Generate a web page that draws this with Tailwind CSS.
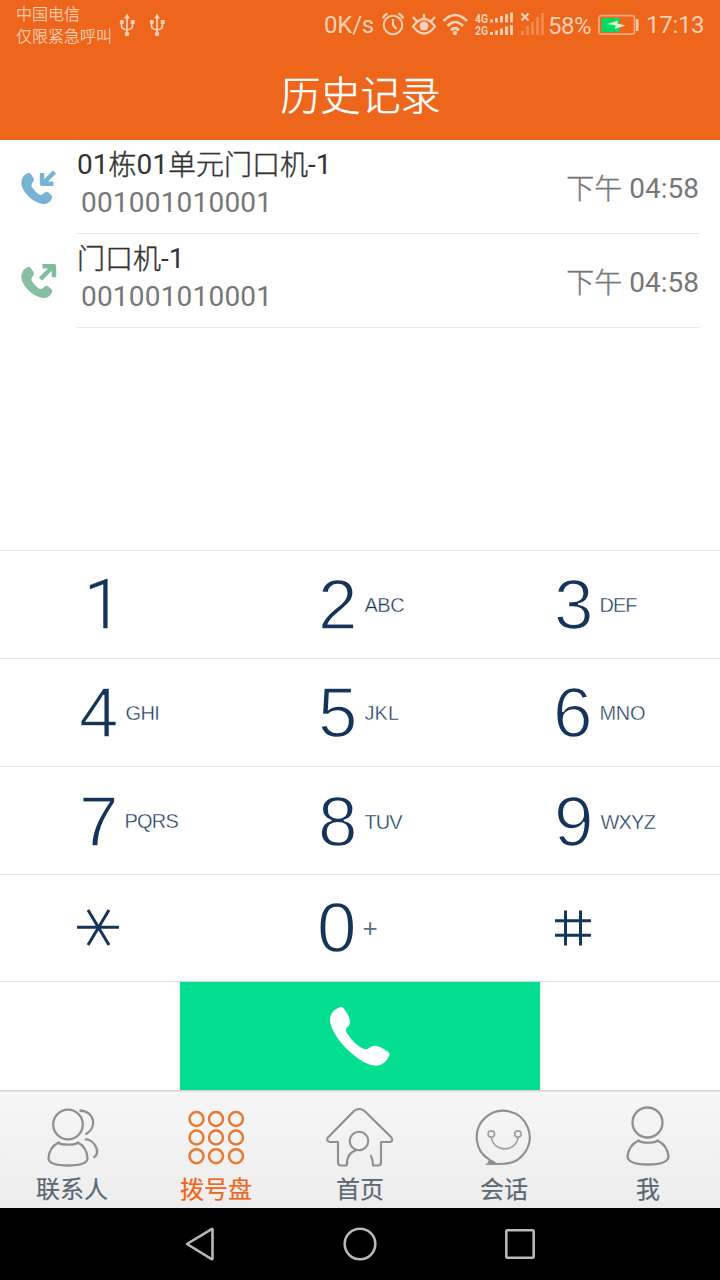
<!DOCTYPE html>
<html lang="zh-CN">
<head>
<meta charset="utf-8">
<title>历史记录</title>
<script src="https://cdn.jsdelivr.net/npm/@tailwindcss/browser@4"></script>
</head>
<body class="w-[720px] h-[1280px] overflow-hidden bg-white flex flex-col font-['Roboto','Noto_Sans_CJK_SC',sans-serif]">
<header class="h-[140px] shrink-0 bg-[#ed661b] text-[#fbcfb5]">
  <div class="h-[50px] flex items-start pl-4">
    <div class="w-[96px] shrink-0 whitespace-nowrap text-[16px] leading-[22px] pt-[2px] font-light [-webkit-text-stroke:0.25px_currentColor] font-['Noto_Sans_CJK_SC',sans-serif]">中国电信<br>仅限紧急呼叫</div>
    <svg class="w-[50px] h-[50px] ml-1.5 shrink-0" viewBox="118 0 50 50" fill="none" stroke="currentColor" stroke-width="1.7">
      <g id="usb"><path d="M127 17v17M121.500 23v3q0 3 5.500 4M132.500 23v3q0 3-5.500 4"/><path d="M127 13.500l3 5h-6z" fill="currentColor" stroke="none"/><circle cx="127" cy="34" r="2.300" fill="currentColor" stroke="none"/><circle cx="121.800" cy="22" r="2.200" fill="currentColor" stroke="none"/><path d="M130.700 20h4v4h-4z" fill="currentColor" stroke="none"/></g>
      <use href="#usb" x="30"/>
    </svg>
    <div class="w-[56px] ml-[156px] shrink-0 text-[24px] leading-[51px] tracking-[-0.2px]">0K/s</div>
    <svg class="w-[166px] h-[50px] shrink-0" viewBox="380 0 166 50" fill="none" stroke="currentColor" stroke-width="2">
      <circle cx="393" cy="25" r="9.300"/><path d="M393 19v6l3.500 4" stroke-width="2.200"/><path d="M383 18.500q1-3.500 4.500-5M403 18.500q-1-3.500-4.500-5" stroke-width="2.400"/>
      <path d="M413 26.500q11-15 22 0q-11 14-22 0z" stroke-width="2.300"/><circle cx="424" cy="26" r="4.500" fill="currentColor" stroke="none"/><path d="M424 14v5M413 17l4 4.500M435 17l-4 4.500" stroke-width="2.300"/>
      <path d="M443.500 21q11.500-12 23.500 0M447.500 26q7.500-8 15.500 0M451 30.300q4-4 8 0" stroke-width="2.700"/><circle cx="455" cy="33" r="2.200" fill="currentColor" stroke="none"/>
      <g fill="currentColor" stroke="none" font-family="Roboto" font-weight="700" font-size="12.500"><text x="475" y="22.500" textLength="13" lengthAdjust="spacingAndGlyphs">4G</text><text x="475" y="35" textLength="13" lengthAdjust="spacingAndGlyphs">2G</text></g>
      <path d="M491.500 22.500v-3M496.500 22.500v-4.500M501.500 22.500v-6.500M506.500 22.500v-8.500M511.500 22.500v-10M491.500 35v-3M496.500 35v-4.500M501.500 35v-6.500M506.500 35v-8.500M511.500 35v-10" stroke-width="2.800"/>
      <path d="M521.500 13.500l7 7M528.500 13.500l-7 7" stroke-width="2.300"/>
      <path d="M522.500 35v-4M527.500 35v-9M532.500 35v-13M537.500 35v-18M542.500 35v-22" stroke="#f38a50" stroke-width="2.800"/>
    </svg>
    <div class="w-[50px] pl-[2px] shrink-0 text-[24px] leading-[52px] tracking-[-0.5px]">58%</div>
    <svg class="w-[44px] h-[50px] shrink-0" viewBox="596 0 44 50"><rect x="599" y="15.700" width="35.500" height="18.500" rx="2.500" fill="none" stroke="#f8a67c" stroke-width="1.800"/><path fill="#00dc63" d="M601.500 18h18v14h-18z"/><path fill="#fbcfb5" d="M636 19h1.500q1 0 1 1v10q0 1-1 1H636z"/><path fill="#d7f2c5" d="M607 24l11-3.500-.5 3 8 2-10.500 3.500.5-3.500z"/></svg>
    <div class="pl-[6px] shrink-0 text-[24px] leading-[51px] tracking-[-0.3px]">17:13</div>
  </div>
  <h1 class="pl-px text-center text-white text-[40px] leading-[87px] font-light [-webkit-text-stroke:0.5px_currentColor] font-['Noto_Sans_CJK_SC',sans-serif]">历史记录</h1>
</header>

<main class="h-[410px] shrink-0 text-[28px]">
  <div class="h-[94px] flex pr-5">
    <svg class="w-[77px] h-[93px] shrink-0" viewBox="0 140 77 93"><path d="M28 173q-6.500 2.500-6.700 10.300C22 193 35 204 43.500 204q6 0 8.500-5.800.6-1.700-.5-2.900l-3.200-2.800q-1.600-1.300-3.500 0l-2.500 2q-2 1-4-.5q-4-3-6.500-7q-1-2 .2-3.500l1.500-2.500q1-1.500 0-3l-3-4.300q-1-1.500-2.500-.7z" fill="#77b3d3"/><path d="M54.500 172L43 183.500M42 173v10.800h11.500" fill="none" stroke="#75b5d3" stroke-width="4.400" stroke-linejoin="round"/></svg>
    <div class="grow flex items-center border-b border-[#e8e8e8] whitespace-nowrap">
      <div class="grow self-start text-[#333] leading-[38px] pt-[6px]">01<span class="font-light align-[-1px] leading-none [-webkit-text-stroke:0.4px_currentColor]">栋</span>01<span class="font-light align-[-1px] leading-none [-webkit-text-stroke:0.4px_currentColor]">单元门口机</span>-1<div class="pl-[4px] text-[#777] tracking-[0.2px]">001001010001</div></div>
      <div class="text-[#777] pt-[5px] pr-px"><span class="font-light align-[-1px] leading-none [-webkit-text-stroke:0.4px_currentColor]">下午</span> 04:58</div>
    </div>
  </div>
  <div class="h-[94px] flex pr-5">
    <svg class="w-[77px] h-[93px] shrink-0" viewBox="0 140 77 93"><path d="M28 173q-6.500 2.500-6.700 10.300C22 193 35 204 43.500 204q6 0 8.500-5.800.6-1.700-.5-2.900l-3.200-2.800q-1.600-1.300-3.500 0l-2.500 2q-2 1-4-.5q-4-3-6.500-7q-1-2 .2-3.500l1.500-2.500q1-1.500 0-3l-3-4.300q-1-1.500-2.500-.7z" fill="#87bfa0"/><path d="M40.500 185L53 172.500M42.500 172.300H54v11" fill="none" stroke="#80bd9c" stroke-width="4.400" stroke-linejoin="round"/></svg>
    <div class="grow flex items-center border-b border-[#e8e8e8] whitespace-nowrap">
      <div class="grow self-start text-[#333] leading-[38px] pt-[6px]"><span class="font-light align-[-1px] leading-none [-webkit-text-stroke:0.4px_currentColor]">门口机</span>-1<div class="pl-[4px] text-[#777] tracking-[0.2px]">001001010001</div></div>
      <div class="text-[#777] pt-[5px] pr-px"><span class="font-light align-[-1px] leading-none [-webkit-text-stroke:0.4px_currentColor]">下午</span> 04:58</div>
    </div>
  </div>
</main>

<section class="h-[432px] shrink-0 border-b border-[#dde6f0] grid grid-rows-[108px_108px_108px_107px] text-[71px] leading-[106px] text-[#14345a] font-['Liberation_Sans',sans-serif] [-webkit-text-stroke:1.5px_white]">
  <div class="grid grid-cols-3 border-t border-[#dde6f0] *:flex *:items-center">
    <div class="pl-[84px]"><span class="pt-px font-['Roboto',sans-serif] font-light text-[69px] [-webkit-text-stroke:0.3px_currentColor]">1</span></div>
    <div class="pl-[78px] pt-px"><span>2</span><span class="ml-[7px] text-[20px] tracking-[-0.5px] [-webkit-text-stroke:0.4px_white]">ABC</span></div>
    <div class="pl-[74px] pt-px"><span>3</span><span class="ml-[6px] text-[20px] tracking-[-1px] [-webkit-text-stroke:0.4px_white]">DEF</span></div>
  </div>
  <div class="grid grid-cols-3 border-t border-[#dde6f0] *:flex *:items-center">
    <div class="pl-[79px] pt-px"><span>4</span><span class="ml-[7px] text-[20px] tracking-[-0.6px] [-webkit-text-stroke:0.4px_white]">GHI</span></div>
    <div class="pl-[78px] pt-px"><span>5</span><span class="ml-[7px] text-[20px] tracking-[0.1px] [-webkit-text-stroke:0.4px_white]">JKL</span></div>
    <div class="pl-[73px] pt-px"><span>6</span><span class="ml-[7px] text-[20px] tracking-[-0.3px] [-webkit-text-stroke:0.4px_white]">MNO</span></div>
  </div>
  <div class="grid grid-cols-3 border-t border-[#dde6f0] *:flex *:items-center">
    <div class="pl-[79px] pt-px"><span>7</span><span class="ml-[6px] pb-[2px] text-[20px] tracking-[-0.8px] [-webkit-text-stroke:0.4px_white]">PQRS</span></div>
    <div class="pl-[78px] pt-px"><span>8</span><span class="ml-[7px] text-[20px] tracking-[-0.9px] [-webkit-text-stroke:0.4px_white]">TUV</span></div>
    <div class="pl-[74px] pt-px"><span>9</span><span class="ml-[7px] text-[20px] tracking-[-0.8px] [-webkit-text-stroke:0.4px_white]">WXYZ</span></div>
  </div>
  <div class="grid grid-cols-3 border-t border-[#dde6f0] *:flex *:items-center">
    <div class="pl-[77px]"><svg class="w-[42px] h-[42px]" viewBox="77 907 42 42" stroke="#14345a" stroke-width="3"><path d="M77 927.300h42M88 910l21 35M109 910l-21 35"/></svg></div>
    <div class="pl-[77px]"><span>0</span><span class="ml-[6px] text-[26px] text-[#5b6f88] [-webkit-text-stroke:0px]">+</span></div>
    <div class="pl-[75px]"><svg class="w-[36px] h-[36px]" viewBox="555 910 36 36" stroke="#14345a" stroke-width="3"><path d="M555 920.700h36M555 935.200h36M565.500 910.500v35M580.500 910.500v35"/></svg></div>
  </div>
</section>

<div class="h-[108px] shrink-0 flex justify-center">
  <div class="w-[360px] bg-[#03de91] shadow-[0_0_4px_#0000002a] flex items-center justify-center">
    <svg class="w-[60px] h-[60px]" viewBox="330 1006.500 60 60"><path fill="#fff" d="M341.500 1007.200q-9 2-11.500 11c-2 17 29 48 46 48q9-.5 13.500-10.500q.3-1.800-1-3q-8-6.500-14-6.500q-3 0-5 2q-2 2-5 1.500q-10-4-17.800-16.500q-1.500-3.500.3-5.200q3.400-2 2.800-7.300q-1-6-6.300-12q-1-1.300-2-1.500z"/></svg>
  </div>
</div>

<nav class="h-[118px] shrink-0 border-t border-[#d8cfcf] shadow-[inset_0_1px_1px_#ebe6e6] bg-linear-to-b from-[#f6f6f6] to-[#ededed] grid grid-cols-5 text-center text-[24px] leading-[36px] text-[#5b6873] [-webkit-text-stroke:0.2px_currentColor] font-['Noto_Sans_CJK_SC',sans-serif]">
  <div><svg class="block w-full h-[79px]" viewBox="0 1091 144 79" fill="none" stroke="#8f8f8f" stroke-width="2.300"><circle cx="68" cy="1124.500" r="14.800"/><path d="M79.500 1110.500c16 1 18 17 6 24M85 1139.500c9-1 17 14 8.500 18"/><path d="M58.500 1142.500q-9.500 5-10 16q.5 7 19.500 7t19.500-7q-.5-11-9.500-16q-2 2.200-10 2.200t-9.500-2.200z"/></svg>联系人</div>
  <div class="text-[#ee671b]"><svg class="block w-full h-[79px]" viewBox="144 1091 144 79" fill="none" stroke="#e77a33" stroke-width="2.500"><g id="dots"><circle cx="196.500" cy="1119" r="7"/><circle cx="216" cy="1119" r="7"/><circle cx="236" cy="1119" r="7"/></g><use href="#dots" y="18.500"/><use href="#dots" y="37.200"/></svg>拨号盘</div>
  <div><svg class="block w-full h-[79px]" viewBox="288 1091 144 79" fill="none" stroke="#8f8f8f" stroke-width="2.100" stroke-linejoin="round"><path d="M347 1165.500h-6q-3 0-3-3V1142h-8q-4-1-2.500-4L354 1111q5.500-4 10.500 0L391 1137q3 4-1 5h-9v20q0 3.500-3 3.500h-5c0-4-.5-7-2.500-10.500M347 1165.500q-1-12 9.500-15.500"/><circle cx="359" cy="1141" r="9.300"/></svg>首页</div>
  <div><svg class="block w-full h-[79px]" viewBox="432 1091 144 79" fill="none" stroke="#8f8f8f" stroke-width="2.100"><path d="M490 1160.200a26.500 26.500 0 1 1 14 3.500q-8 .2-14.500.3"/><path d="M488.500 1158.500l6.500 3 2 3-12.500.5q5-2.500 4-6.500z" fill="#8f8f8f" stroke="none"/><g stroke="#a0a0a0" stroke-width="1.700"><circle cx="491.300" cy="1134" r="3.200"/><circle cx="518" cy="1134" r="3.200"/><path d="M491.500 1137.500a13.300 12.500 0 0 0 26.500 0"/></g></svg>会话</div>
  <div><svg class="block w-full h-[79px]" viewBox="576 1091 144 79" fill="none" stroke="#8f8f8f" stroke-width="2.300"><circle cx="647.500" cy="1122.500" r="15"/><path d="M638.500 1140.500q-10 5-11 16q.5 8 20.500 8t20.500-8q-1-11-11-16q-2 2.200-9.500 2.200t-9.500-2.200z"/></svg>我</div>
</nav>

<footer class="h-[72px] shrink-0 bg-black">
  <svg class="w-[720px] h-[72px]" viewBox="0 1208 720 72" fill="none" stroke="#b8b8b8" stroke-width="2.600" stroke-linejoin="round"><path d="M187 1244l25-15.200q.5 0 .5.500v29.500q0 .5-.5.500z"/><circle cx="360" cy="1244" r="15.300"/><rect x="506.300" y="1230.300" width="27.400" height="27.400" rx="1"/></svg>
</footer>
</body>
</html>
